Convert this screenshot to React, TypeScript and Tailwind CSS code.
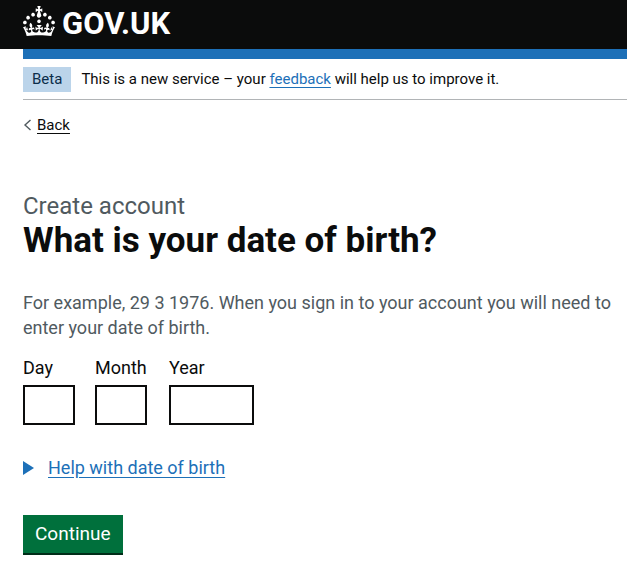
import React from 'react';

interface DateField {
    id: string;
    label: string;
    maxLength: number;
    width: string;
}

const dateFields: DateField[] = [
    { id: 'dob-day', label: 'Day', maxLength: 2, width: 'w-[52px]' },
    { id: 'dob-month', label: 'Month', maxLength: 2, width: 'w-[52px]' },
    { id: 'dob-year', label: 'Year', maxLength: 4, width: 'w-[85px]' },
];

const Crown: React.FC = () => (
    <svg width="32" height="30" viewBox="0 0 32 30" fill="currentColor" aria-hidden="true">
        <path d="M22.6 10.4c-1 .4-2-.1-2.4-1-.4-.9.1-2 1-2.4.9-.4 2 .1 2.4 1s-.1 2-1 2.4m4.9 3c-1 .4-2-.1-2.4-1-.4-.9.1-2 1-2.4.9-.4 2 .1 2.4 1s0 2-1 2.4m3.3 4.8c-1 .4-2-.1-2.4-1-.4-.9.1-2 1-2.4.9-.4 2 .1 2.4 1s-.1 2-1 2.4M17 4.7l2.3 1.2V2.5l-2.3.7-.2-.2.9-3h-3.4l.9 3-.2.2c-.1.1-2.3-.7-2.3-.7v3.4L15 4.7c.1.1.1.2.2.2l-1.3 4c-.1.2-.1.4-.1.6 0 1.1.8 2 1.9 2.2h.7c1-.2 1.9-1.1 1.9-2.1 0-.2 0-.4-.1-.6l-1.3-4c-.1-.2 0-.2.1-.3m-.3 12.4c-.9.4-2-.1-2.4-1-.4-.9.1-2 1-2.4.9-.4 2 .1 2.4 1s-.1 2-1 2.4m-7.3-6.7c.9.4 2-.1 2.4-1 .4-.9-.1-2-1-2.4-.9-.4-2 .1-2.4 1s0 2 1 2.4m-5 3c.9.4 2-.1 2.4-1 .4-.9-.1-2-1-2.4-.9-.4-2 .1-2.4 1s.1 2 1 2.4m-3.2 4.8c.9.4 2-.1 2.4-1 .4-.9-.1-2-1-2.4-.9-.4-2 .1-2.4 1s0 2 1 2.4m14.8 11c4.4 0 8.6.3 12.3.8 1.1-4.5 2.4-7 3.7-8.8l-2.5-.9c.2 1.3.3 1.9 0 2.7-.4-.4-.8-1.1-1.1-2.3l-1.2 4c.7-.5 1.3-.8 2-.9-1.1 2.5-2.6 3.1-3.5 3-1.1-.2-1.7-1.2-1.5-2.1.3-1.2 1.5-1.5 2.1-.1 1.1-2.3-.8-3-2-2.3 1.9-1.9 2.1-3.5.6-5.6-2.1 1.6-2.1 3.2-1.2 5.5-1.2-1.4-3.2-.6-2.5 1.6.9-1.4 2.1-.5 1.9.8-.2 1.1-1.7 2.1-3.5 1.9-2.7-.2-2.9-2.1-2.9-3.6.7-.1 1.9.5 2.9 1.9l.4-4.3c-1.1 1.1-2.1 1.4-3.2 1.4.4-1.2 2.1-3 2.1-3h-5.4s1.7 1.9 2.1 3c-1.1 0-2.1-.2-3.2-1.4l.4 4.3c1-1.4 2.2-2 2.9-1.9-.1 1.5-.2 3.4-2.9 3.6-1.9.2-3.4-.8-3.5-1.9-.2-1.3 1-2.2 1.9-.8.7-2.3-1.2-3-2.5-1.6.9-2.2.9-3.9-1.2-5.5-1.5 2-1.3 3.7.6 5.6-1.2-.7-3.1 0-2 2.3.6-1.4 1.8-1.1 2.1.1.2.9-.3 1.9-1.5 2.1-.9.2-2.4-.5-3.5-3 .6 0 1.2.3 2 .9l-1.2-4c-.3 1.1-.7 1.9-1.1 2.3-.3-.8-.2-1.4 0-2.7l-2.9.9C1.3 23 2.6 25.5 3.7 30c3.7-.5 7.9-.8 12.3-.8" />
    </svg>
);

const App: React.FC = () => {
    return (
        <div className="font-['Roboto',sans-serif] text-[#0b0c0c] bg-white">
            <header className="bg-[#0b0c0c] pl-[23px] h-[49px] flex items-start pt-[6px]">
                <a href="#" className="flex items-start gap-[7px] text-white font-bold text-[31px] leading-9">
                    <Crown />
                    <span>GOV.UK</span>
                </a>
            </header>

            <div className="pl-[23px]">
                <div className="h-[10px] bg-[#1d70b8]" />

                {/* Phase banner */}
                <div className="flex items-center gap-[10px] pt-2 pb-[7px] border-b border-[#b1b4b6] text-[15px] leading-[25px]">
                    <strong className="bg-[#bbd4ea] text-[#0c2d4a] font-normal px-[9px]">Beta</strong>
                    <span>
                        This is a new service – your{' '}
                        <a href="#" className="text-[#1d70b8] underline underline-offset-3">feedback</a>{' '}
                        will help us to improve it.
                    </span>
                </div>

                <a href="#" className="flex items-center w-fit gap-[5px] mt-[15px] text-[15px] leading-5">
                    <svg width="9" height="14" viewBox="0 0 9 14" fill="none" stroke="#505a5f" strokeWidth="1.4" aria-hidden="true">
                        <path d="M7.5 2 2 7l5.5 5" />
                    </svg>
                    <span className="underline underline-offset-3">Back</span>
                </a>

                <main className="pt-[56px]">
                    <form onSubmit={(e) => e.preventDefault()}>
                        <fieldset aria-describedby="dob-hint">
                            <legend>
                                <span className="block text-[24px] leading-[30px] text-[#505a5f]">Create account</span>
                                <h1 className="text-[35px] leading-10 font-bold">What is your date of birth?</h1>
                            </legend>
                            <p id="dob-hint" className="mt-[29px] text-[18px] leading-[25px] text-[#505a5f]">
                                For example, 29 3 1976. When you sign in to your account you will need to enter your date of birth.
                            </p>
                            <div className="flex mt-[15px] gap-5">
                                {dateFields.map((field) => (
                                    <div key={field.id} className="flex flex-col gap-[5px] nth-2:min-w-[54px]">
                                        <label htmlFor={field.id} className="text-[18px] leading-[25px]">{field.label}</label>
                                        <input
                                            id={field.id}
                                            type="text"
                                            inputMode="numeric"
                                            maxLength={field.maxLength}
                                            className={`${field.width} h-10 border-2 border-[#0b0c0c] p-[5px] text-[18px]`}
                                        />
                                    </div>
                                ))}
                            </div>
                        </fieldset>

                        <details className="mt-[30px] text-[18px] leading-[25px]">
                            <summary className="flex items-center gap-[14px] w-fit cursor-pointer text-[#1d70b8]">
                                <svg width="11" height="14" viewBox="0 0 11 14" fill="currentColor" aria-hidden="true">
                                    <path d="M0 0v14l11-7z" />
                                </svg>
                                <span className="underline underline-offset-3">Help with date of birth</span>
                            </summary>
                        </details>

                        <button type="submit" className="mt-[35px] h-10 px-3 bg-[#00703c] border-b-2 border-[#002d18] text-white text-[19px] leading-5">
                            Continue
                        </button>
                    </form>
                </main>
            </div>
        </div>
    );
};

export default App;
